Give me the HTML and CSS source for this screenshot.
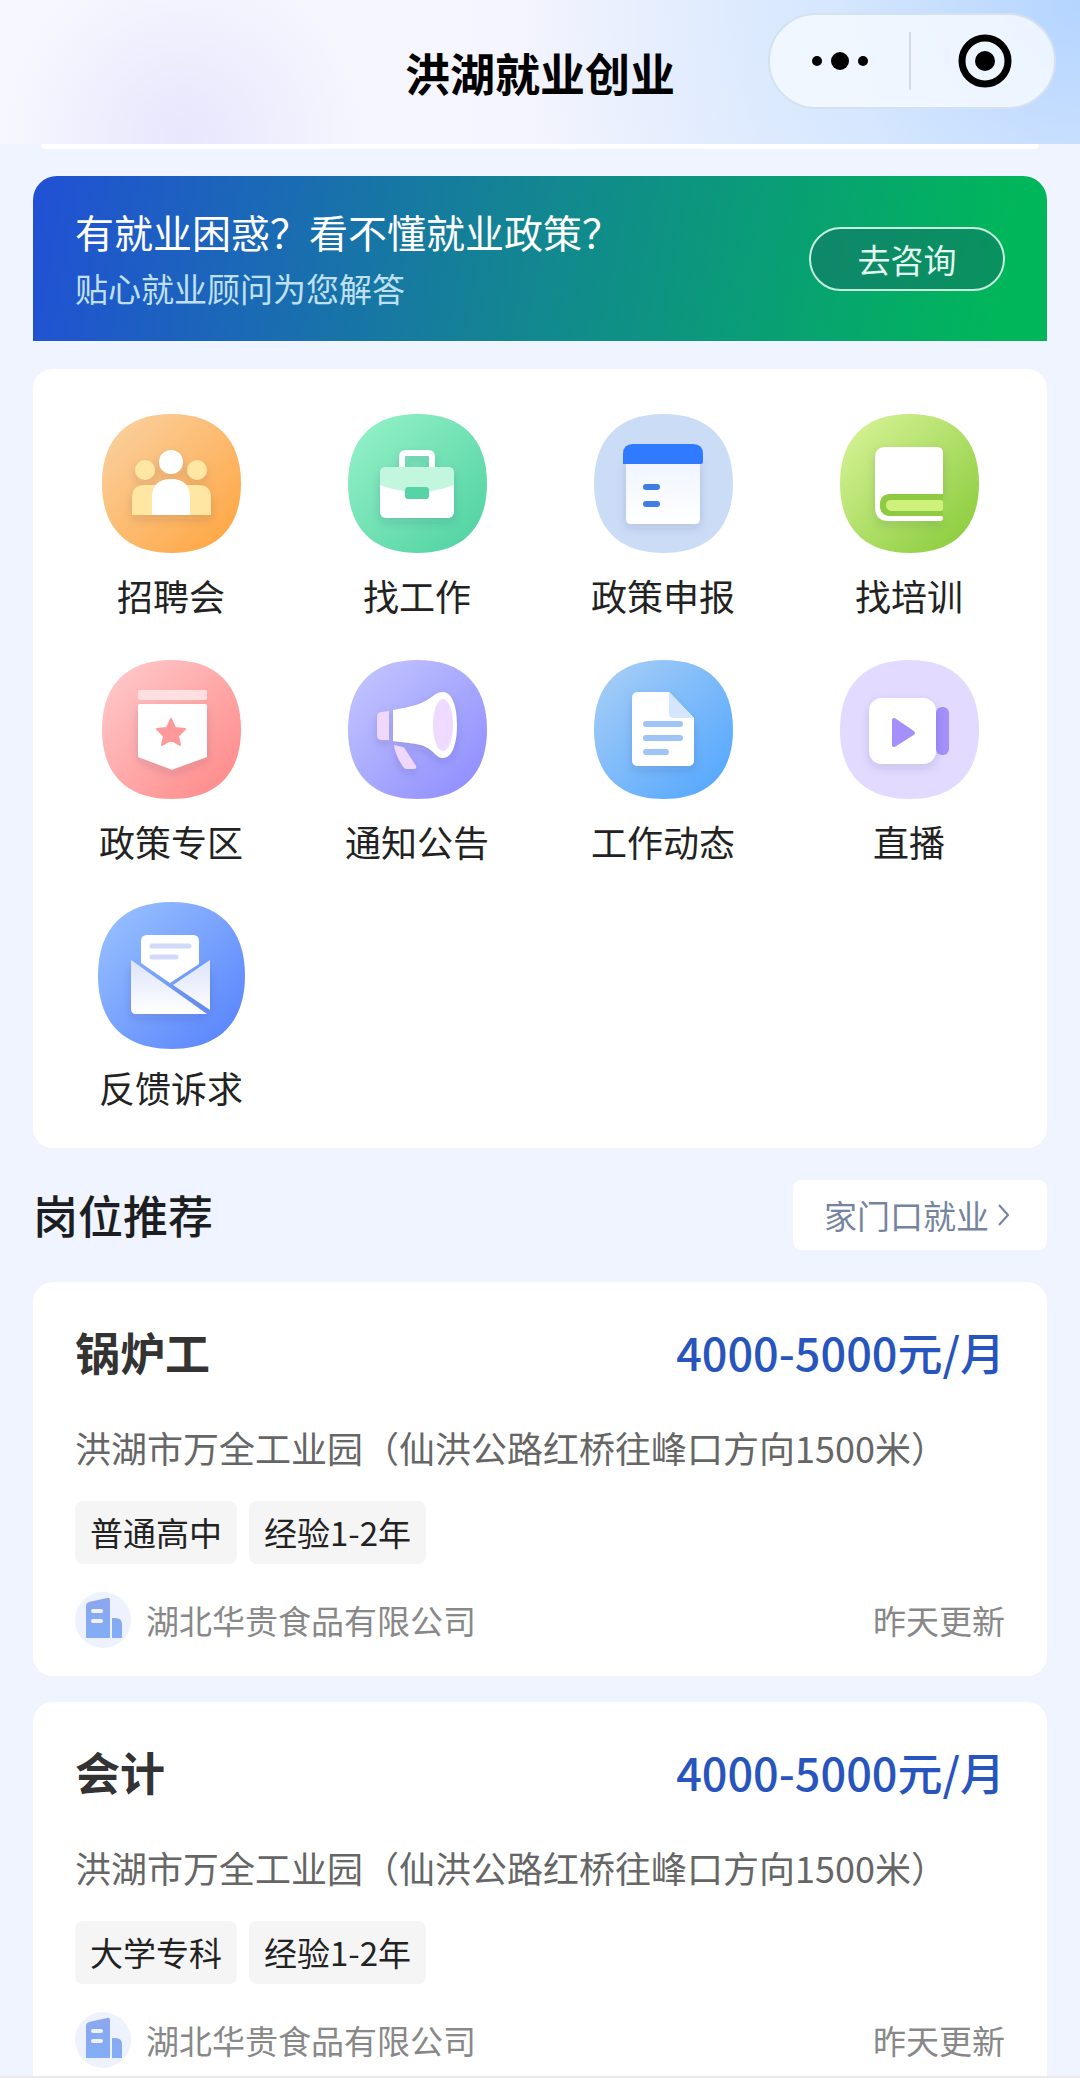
FILE: index.html
```html
<!DOCTYPE html>
<html lang="zh-CN">
<head>
  <meta charset="UTF-8">
  <meta name="viewport" content="width=device-width, initial-scale=1.0">
  <title>洪湖就业创业</title>
  <link rel="stylesheet" href="styles.css">
</head>
<body>
  <svg class="defs" aria-hidden="true">
    <defs>
      <linearGradient id="orange" x1="0" y1="0" x2="1" y2="1"><stop offset="0" stop-color="#fad3a5"/><stop offset="1" stop-color="#ffa33c"/></linearGradient>
      <linearGradient id="mint" x1="0" y1="0" x2="1" y2="1"><stop offset="0" stop-color="#98f3c9"/><stop offset="1" stop-color="#4cd0a0"/></linearGradient>
      <linearGradient id="lime" x1="0" y1="0" x2="1" y2="1"><stop offset="0" stop-color="#dcf59c"/><stop offset="1" stop-color="#84c935"/></linearGradient>
      <linearGradient id="pink" x1="0" y1="0" x2="1" y2="1"><stop offset="0" stop-color="#ffcdcd"/><stop offset="1" stop-color="#ff8585"/></linearGradient>
      <linearGradient id="violet" x1="0" y1="0" x2="1" y2="1"><stop offset="0" stop-color="#c6c8ff"/><stop offset="1" stop-color="#8c8aff"/></linearGradient>
      <linearGradient id="sky" x1="0" y1="0" x2="1" y2="1"><stop offset="0" stop-color="#abd0f6"/><stop offset="1" stop-color="#4ea4ff"/></linearGradient>
      <linearGradient id="blue" x1="0" y1="0" x2="1" y2="1"><stop offset="0" stop-color="#9cc4ff"/><stop offset="1" stop-color="#5480fc"/></linearGradient>
      <linearGradient id="paper" x1="0" y1="0" x2="0" y2="1"><stop offset="0" stop-color="#dde4fb"/><stop offset="1" stop-color="#ffffff"/></linearGradient>
      <linearGradient id="sheet" x1="0" y1="0" x2="0" y2="1"><stop offset="0" stop-color="#eff4ff"/><stop offset="1" stop-color="#ffffff"/></linearGradient>
      <linearGradient id="tower" x1="0" y1="0" x2="0" y2="1"><stop offset="0" stop-color="#8ca6ee"/><stop offset="1" stop-color="#82adf5"/></linearGradient>
      <filter id="drop" x="-20%" y="-20%" width="140%" height="150%"><feDropShadow dx="0" dy="4" stdDeviation="5" flood-color="#203060" flood-opacity="0.14"/></filter>
    </defs>
    <symbol id="squircle" viewBox="0 0 140 140"><path d="M0 70C0 25 25 0 70 0S140 25 140 70S115 140 70 140S0 115 0 70Z"/></symbol>
    <symbol id="building" viewBox="0 0 56 56">
      <circle cx="28" cy="28" r="28" fill="#edf2fe"/>
      <path d="M11 14Q11 11 14 10L32 6Q35 5 35 8V46H11ZM37 26H40Q47 26 47 32V46H37Z" fill="url(#tower)"/>
      <path d="M18 19H26M18 29H26" stroke="#edf2fe" stroke-width="4" stroke-linecap="round"/>
    </symbol>
  </svg>

  <header class="navbar">
    <h1>洪湖就业创业</h1>
    <div class="capsule">
      <button type="button" aria-label="更多">
        <svg width="58" height="20" viewBox="0 0 58 20"><circle cx="6" cy="10" r="5"/><circle cx="29" cy="10" r="9"/><circle cx="52" cy="10" r="5"/></svg>
      </button>
      <button type="button" aria-label="关闭">
        <svg width="54" height="54" viewBox="0 0 54 54"><circle cx="27" cy="27" r="23" fill="none" stroke="#000" stroke-width="7"/><circle cx="27" cy="27" r="10"/></svg>
      </button>
    </div>
  </header>

  <main class="page">
    <div class="prev-card"></div>

    <section class="banner">
      <div>
        <p class="banner-title">有就业困惑？看不懂就业政策？</p>
        <p class="banner-sub">贴心就业顾问为您解答</p>
      </div>
      <button type="button" class="consult">去咨询</button>
    </section>

    <nav class="menu">
      <a href="#">
        <svg class="icon" viewBox="0 0 139 139">
          <use href="#squircle" fill="url(#orange)"/>
          <g filter="url(#drop)">
            <g fill="#ffe6a3"><circle cx="43" cy="56" r="10"/><circle cx="95" cy="56" r="10"/><path d="M30 101V84Q30 71 43 71H96Q109 71 109 84V101Z"/></g>
            <circle cx="69" cy="48" r="12" fill="#fff"/><path d="M50 101V84Q50 65 69 65T88 84V101Z" fill="#fff"/>
          </g>
        </svg>
        <span>招聘会</span>
      </a>
      <a href="#">
        <svg class="icon" viewBox="0 0 139 139">
          <use href="#squircle" fill="url(#mint)"/>
          <g filter="url(#drop)">
            <path d="M54 56V43Q54 39 58 39H80Q84 39 84 43V56" fill="none" stroke="#fff" stroke-width="6"/>
            <rect x="32" y="53" width="74" height="51" rx="6" fill="#fff"/>
            <path d="M32 71V59Q32 53 38 53H100Q106 53 106 59V71Q88 78 69 78T32 71Z" fill="#c3f6df"/>
            <rect x="57" y="73" width="24" height="12" rx="3" fill="#58d3a5"/>
          </g>
        </svg>
        <span>找工作</span>
      </a>
      <a href="#">
        <svg class="icon" viewBox="0 0 139 139">
          <use href="#squircle" fill="#cbdcf7"/>
          <g filter="url(#drop)">
            <path d="M32 45H106V105Q106 110 101 110H37Q32 110 32 105Z" fill="url(#sheet)"/>
          </g>
          <path d="M29 50V40Q29 30 39 30H99Q109 30 109 40V48Q109 50 107 50H31Q29 50 29 50Z" fill="#307aff"/>
          <path d="M52 73H63M52 90H63" stroke="#3f7ce4" stroke-width="6" stroke-linecap="round"/>
        </svg>
        <span>政策申报</span>
      </a>
      <a href="#">
        <svg class="icon" viewBox="0 0 139 139">
          <use href="#squircle" fill="url(#lime)"/>
          <g filter="url(#drop)">
            <path d="M35 93V44Q35 33 46 33H97Q103 33 103 39V80H51Q40 80 40 91T51 102H101Q103 102 103 104T101 107H49Q35 107 35 93Z" fill="#fff"/>
          </g>
          <path d="M103 80H51Q40 80 40 91T51 102H103Z" fill="#8fca42"/>
          <path d="M101 86H51Q46 86 46 91T51 97H101Q103 97 103 95V88Q103 86 101 86Z" fill="#cdf17b"/>
        </svg>
        <span>找培训</span>
      </a>
      <a href="#">
        <svg class="icon" viewBox="0 0 139 139">
          <use href="#squircle" fill="url(#pink)"/>
          <rect x="36" y="30" width="69" height="10" rx="2" fill="#ffdfdf"/>
          <path d="M38 44H103Q105 44 105 46V97L72 109Q70 110 68 109L36 97V46Q36 44 38 44Z" fill="#fff" filter="url(#drop)"/>
          <path d="M69 59L73 68L83 69L76 76L78 85L69 80L60 85L62 76L55 69L65 68Z" fill="#ff9999" stroke="#ff9999" stroke-width="2" stroke-linejoin="round"/>
        </svg>
        <span>政策专区</span>
      </a>
      <a href="#">
        <svg class="icon" viewBox="0 0 139 139">
          <use href="#squircle" fill="url(#violet)"/>
          <g filter="url(#drop)">
            <path d="M41 51V80H34Q29 80 29 75V57Q29 52 34 52Z" fill="#f0d8fc"/>
            <path d="M46 85L54 87Q56 87 57 89L68 106Q69 109 66 109H59Q56 109 54 105Q47 94 46 85Z" fill="#f0d8fc"/>
            <path d="M45 50C63 47 75 44 85 36C89 33 91 32 95 32C104 32 109 46 109 65S104 98 95 98C91 98 89 96 85 92C76 83 65 84 45 81Z" fill="#fff"/>
            <ellipse cx="95" cy="65" rx="10" ry="26" fill="#eedbff"/>
          </g>
        </svg>
        <span>通知公告</span>
      </a>
      <a href="#">
        <svg class="icon" viewBox="0 0 139 139">
          <use href="#squircle" fill="url(#sky)"/>
          <path d="M44 32H75L100 58V100Q100 106 94 106H44Q38 106 38 100V38Q38 32 44 32Z" fill="#fff" filter="url(#drop)"/>
          <path d="M75 32L100 58H80Q75 58 75 53Z" fill="#d3e6fe"/>
          <path d="M52 64H86M52 78H86M52 92H72" stroke="#9ec5f6" stroke-width="6" stroke-linecap="round"/>
        </svg>
        <span>工作动态</span>
      </a>
      <a href="#">
        <svg class="icon" viewBox="0 0 139 139">
          <use href="#squircle" fill="#e2daff"/>
          <rect x="96" y="47" width="13" height="48" rx="6" fill="#a58ffa"/>
          <rect x="29" y="38" width="67" height="66" rx="13" fill="#fff" filter="url(#drop)"/>
          <path d="M54 60V85L73 73Z" fill="#a58ffa" stroke="#a58ffa" stroke-width="4" stroke-linejoin="round"/>
        </svg>
        <span>直播</span>
      </a>
      <a href="#">
        <svg class="icon icon-large" viewBox="0 0 147 147">
          <use href="#squircle" fill="url(#blue)"/>
          <path d="M49 33H95Q101 33 101 39V62L72 81L43 61V39Q43 33 49 33Z" fill="#fff"/>
          <path d="M54 44H91M54 55H78" stroke="#d2dafa" stroke-width="5" stroke-linecap="round"/>
          <path d="M33 58L109 112H38Q33 112 33 107ZM112 58V108L75 83Z" fill="url(#paper)" filter="url(#drop)"/>
        </svg>
        <span>反馈诉求</span>
      </a>
    </nav>

    <div class="section-head">
      <h2>岗位推荐</h2>
      <a href="#" class="more">家门口就业
        <svg width="12" height="22" viewBox="0 0 12 22"><path d="M2 1L11 11L2 21" fill="none" stroke="currentColor" stroke-width="2"/></svg>
      </a>
    </div>

    <article class="job">
      <div class="row">
        <h3>锅炉工</h3>
        <strong class="salary">4000-5000元/月</strong>
      </div>
      <p class="address">洪湖市万全工业园（仙洪公路红桥往峰口方向1500米）</p>
      <div class="tags"><span>普通高中</span><span>经验1-2年</span></div>
      <div class="row company">
        <svg class="company-icon"><use href="#building"/></svg>
        <span>湖北华贵食品有限公司</span>
        <time>昨天更新</time>
      </div>
    </article>

    <article class="job">
      <div class="row">
        <h3>会计</h3>
        <strong class="salary">4000-5000元/月</strong>
      </div>
      <p class="address">洪湖市万全工业园（仙洪公路红桥往峰口方向1500米）</p>
      <div class="tags"><span>大学专科</span><span>经验1-2年</span></div>
      <div class="row company">
        <svg class="company-icon"><use href="#building"/></svg>
        <span>湖北华贵食品有限公司</span>
        <time>昨天更新</time>
      </div>
    </article>
  </main>

  <footer class="tabbar"></footer>
</body>
</html>
```
FILE: styles.css
```css
* {
  box-sizing: border-box;
}
body {
  margin: 0;
  height: 100vh;
  display: flex;
  flex-direction: column;
  overflow: hidden;
  font-family: "Noto Sans CJK SC", sans-serif;
  background: #f0f4fe;
  color: #222;
}
h1, h2, h3, p {
  margin: 0;
}
a {
  color: inherit;
  text-decoration: none;
}
button {
  font: inherit;
  cursor: pointer;
}
.defs {
  position: absolute;
  width: 0;
  height: 0;
}

/* top bar */
.navbar {
  flex: none;
  height: 144px;
  display: grid;
  grid-template-columns: 1fr auto 1fr;
  align-items: start;
  padding: 13px 24px 0;
  background:
    radial-gradient(circle at 17% 95%, rgba(228, 226, 252, 0.8), rgba(238, 236, 254, 0) 180px),
    radial-gradient(circle at 100% 0, #b4d4ff, rgba(208, 228, 255, 0.8) 240px, rgba(230, 241, 255, 0) 560px),
    linear-gradient(90deg, #f7f7ff, #f5f5fe 45%, #e4eefc);
}
.navbar h1 {
  grid-column: 2;
  margin-top: 28px;
  font-size: 45px;
  line-height: 64px;
  font-weight: 700;
  color: #000;
}
.capsule {
  justify-self: end;
  display: flex;
  align-items: center;
  width: 288px;
  height: 96px;
  border: 2px solid #d5e1f1;
  border-radius: 48px;
  background: rgba(244, 249, 255, 0.85);
}
.capsule button {
  flex: 1;
  height: 58px;
  display: flex;
  align-items: center;
  justify-content: center;
  padding: 0;
  border: 0;
  background: none;
}
.capsule button + button {
  padding-left: 4px;
  border-left: 2px solid #d3dce8;
}

.page {
  flex: 1;
  min-height: 0;
  overflow: hidden;
  padding: 0 33px;
}
.prev-card {
  height: 5px;
  margin: 0 8px 27px;
  border-radius: 0 0 12px 12px;
  background: #fff;
}

/* consult banner */
.banner {
  display: flex;
  align-items: center;
  justify-content: space-between;
  height: 165px;
  padding: 0 42px;
  border-radius: 24px 24px 0 0;
  background: linear-gradient(100deg, #2150d5, #148296 45%, #00b65a 95%);
  color: #fff;
}
.banner-title {
  font-size: 39px;
  line-height: 58px;
}
.banner-sub {
  font-size: 33px;
  line-height: 56px;
  color: #bfe0f2;
}
.consult {
  width: 196px;
  height: 64px;
  padding: 0;
  border: 2px solid #c4f0dc;
  border-radius: 32px;
  background: rgba(20, 110, 100, 0.5);
  color: #e4fbf0;
  font-size: 33px;
  line-height: 60px;
}

/* icon menu */
.menu {
  display: grid;
  grid-template-columns: repeat(4, 1fr);
  grid-auto-rows: 246px;
  margin-top: 28px;
  padding: 6px 15px 35px;
  border-radius: 20px;
  background: #fff;
}
.menu a {
  display: flex;
  flex-direction: column;
  align-items: center;
  justify-content: flex-end;
  gap: 16px;
  font-size: 36px;
  line-height: 52px;
}
.icon {
  width: 139px;
  height: 139px;
}
.icon-large {
  width: 147px;
  height: 147px;
  margin-bottom: -4px;
}

/* job list */
.section-head {
  display: flex;
  align-items: center;
  justify-content: space-between;
  margin: 32px 0;
}
.section-head h2 {
  font-size: 45px;
  line-height: 70px;
  font-weight: 500;
  color: #1c1e22;
}
.more {
  display: flex;
  align-items: center;
  gap: 8px;
  padding: 0 38px 0 31px;
  border-radius: 8px;
  background: #fff;
  font-size: 33px;
  line-height: 70px;
  color: #75859f;
}
.job {
  margin-bottom: 26px;
  padding: 35px 42px 28px;
  border-radius: 20px;
  background: #fff;
}
.row {
  display: flex;
  align-items: center;
  justify-content: space-between;
}
.job h3, .salary {
  font-size: 45px;
  line-height: 70px;
}
.job h3 {
  font-weight: 700;
  color: #333;
}
.salary {
  font-weight: 500;
  color: #2755bd;
}
.address {
  margin: 34px 0 28px;
  font-size: 36px;
  line-height: 52px;
  color: #666;
}
.tags {
  display: flex;
  gap: 12px;
}
.tags span {
  padding: 0 15px;
  border-radius: 8px;
  background: #f5f5f5;
  font-size: 33px;
  line-height: 63px;
}
.company {
  gap: 15px;
  margin-top: 28px;
  font-size: 33px;
  line-height: 56px;
  color: #888;
}
.company-icon {
  width: 56px;
  height: 56px;
}
.company time {
  margin-left: auto;
}

.tabbar {
  flex: none;
  height: 10px;
  border-top: 2px solid #e8eaee;
  background: #fff;
}
```
